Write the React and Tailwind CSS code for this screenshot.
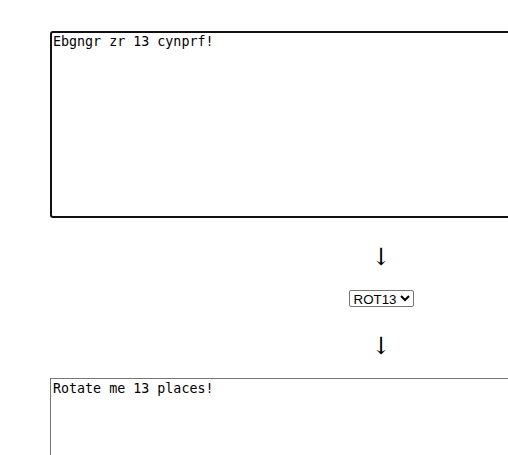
import { useState } from 'react';

const rot13 = (s) =>
  s.replace(/[a-zA-Z]/g, (c) => {
    const base = c <= 'Z' ? 65 : 97;
    return String.fromCharCode(((c.charCodeAt(0) - base + 13) % 26) + base);
  });

const App = () => {
  const [input, setInput] = useState('Ebgngr zr 13 cynprf!');
  const [mode, setMode] = useState('ROT13');

  return (
    <div className="min-h-screen bg-white pl-[50px] pt-[31px] overflow-hidden">
      <div className="w-[662px] flex flex-col items-center">
        {/* Input */}
        <textarea
          value={input}
          onChange={(e) => setInput(e.target.value)}
          className="block w-full h-[187px] border-2 border-[#101010] rounded-[3px] p-[1px] resize-none outline-none text-[13.33px] leading-[16px] text-black font-['DejaVu_Sans_Mono',monospace]"
        />

        <div className="mt-[25px] h-[28px] text-[24px] leading-[28px] text-black font-['DejaVu_Serif',serif]">↓</div>

        <select
          value={mode}
          onChange={(e) => setMode(e.target.value)}
          className="mt-[19px] h-[17px] border border-[#767676] rounded-[2px] bg-white text-[13.33px] leading-[15px] text-black font-['Liberation_Sans',Arial,sans-serif]"
        >
          <option>ROT13</option>
        </select>

        <div className="mt-[25px] h-[28px] text-[24px] leading-[28px] text-black font-['DejaVu_Serif',serif]">↓</div>

        {/* Output */}
        <textarea
          readOnly
          value={mode === 'ROT13' ? rot13(input) : input}
          className="block mt-[18px] w-full h-[185px] border border-[#767676] p-[2px] resize-none outline-none text-[13.33px] leading-[16px] text-black font-['DejaVu_Sans_Mono',monospace]"
        />
      </div>
    </div>
  );
};

export default App;
